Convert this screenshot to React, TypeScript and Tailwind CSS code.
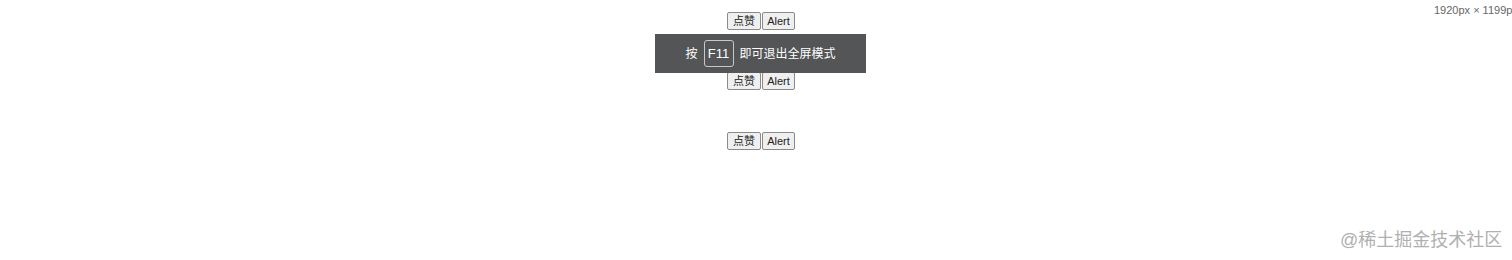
import React from "react";

function Row() {
  return (
    <div className="flex gap-[1px] h-[18px]">
      <button className="w-[34px] h-[18px] flex items-center justify-center bg-[#efefef] border border-[#8a8a8a] rounded-[2px] text-[11px] font-normal text-[#222] leading-none">
        点赞
      </button>
      <button className="w-[33px] h-[18px] flex items-center justify-center bg-[#efefef] border border-[#8a8a8a] rounded-[2px] text-[11px] font-normal text-[#222] leading-none">
        Alert
      </button>
    </div>
  );
}

export default function App() {
  return (
    <div
      className="relative w-[1512px] h-[260px] bg-white overflow-hidden"
      style={{ fontFamily: '"Liberation Sans", "Noto Sans CJK SC", sans-serif' }}
    >
      <div className="flex flex-col items-center pt-[12px] gap-[42px] pl-[10px]">
        <Row />
        <Row />
        <Row />
      </div>

      <div className="absolute left-[655px] top-[34px] w-[211px] h-[39px] bg-[#535557] flex items-center justify-center gap-[6px] text-white text-[12px]">
        <span>按</span>
        <span className="w-[30px] h-[27px] flex items-center justify-center border border-[#c8c8c8] rounded-[3px] text-[13px]">
          F11
        </span>
        <span>即可退出全屏模式</span>
      </div>

      <div className="absolute left-[1434px] top-[2px] whitespace-nowrap text-[11px] text-[#666]">
        1920px × 1199px
      </div>

      <div className="absolute left-[1340px] top-[227px] whitespace-nowrap text-[18px] text-[#b0b0b0]">
        @稀土掘金技术社区
      </div>
    </div>
  );
}
